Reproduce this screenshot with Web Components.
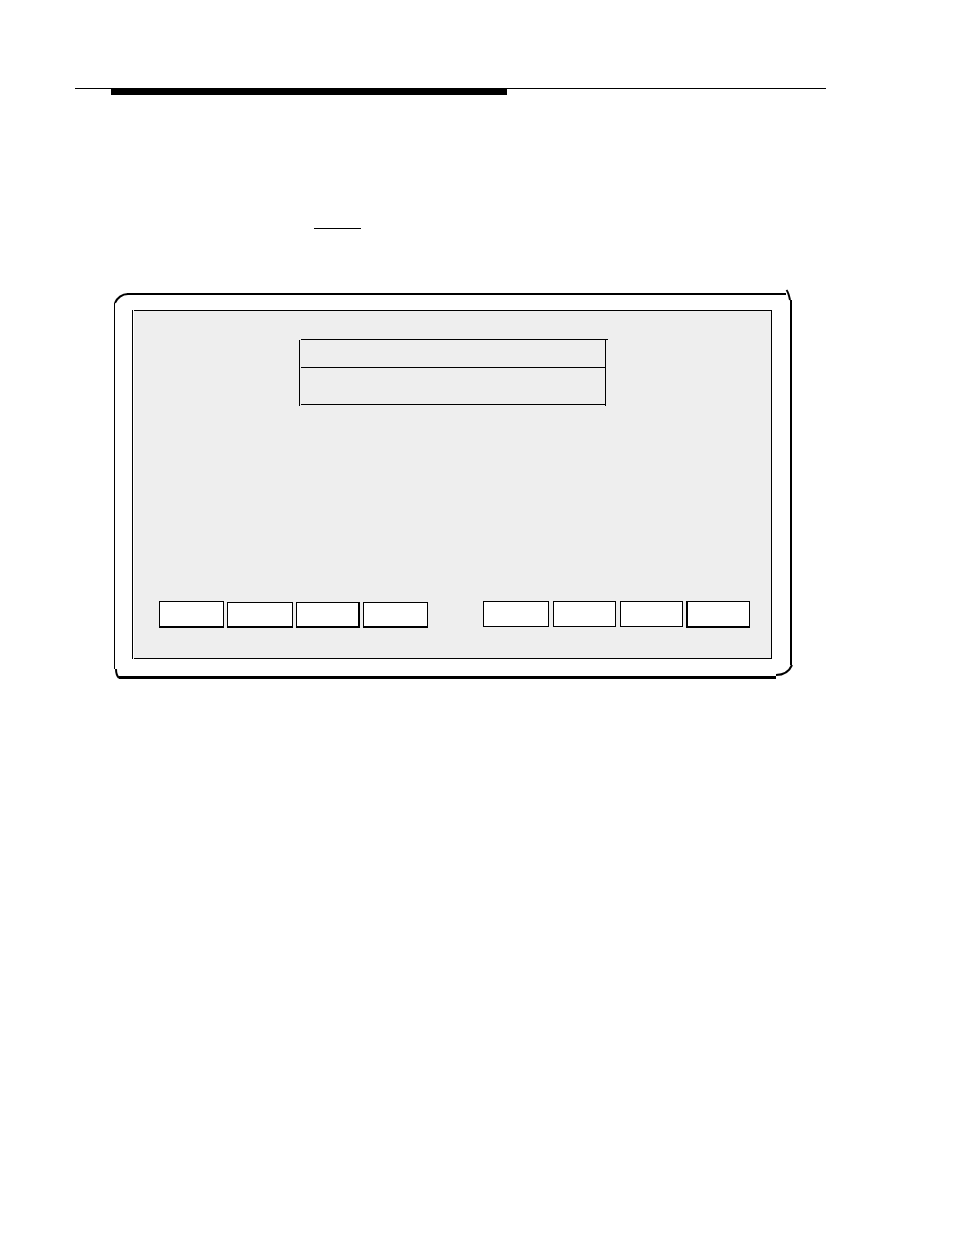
<!DOCTYPE html>
<html lang="en">
<head>
<meta charset="utf-8">
<meta name="viewport" content="width=device-width, initial-scale=1">
<title>Terminal screen</title>
<style>
  body {
    margin: 0;
    background: #fff;
    font-family: "Liberation Sans", sans-serif;
  }
</style>
</head>
<body>
<manual-page>
  <page-rule slot="header"></page-rule>
  <blank-line></blank-line>
  <terminal-frame>
    <message-box></message-box>
    <key-bank slot="keys" first="1"></key-bank>
    <key-bank slot="keys" first="5" class="right"></key-bank>
  </terminal-frame>
</manual-page>

<script>
function define(name, html) {
  const template = document.createElement("template");
  template.innerHTML = html;
  customElements.define(
    name,
    class extends HTMLElement {
      constructor() {
        super();
        this.attachShadow({ mode: "open" }).appendChild(template.content.cloneNode(true));
      }
    }
  );
}

define("manual-page", `
  <style>
    :host { display: block; box-sizing: border-box; min-height: 100vh; padding-top: 88px; }
    header { margin: 0 128px 0 75px; }
    main { display: flow-root; margin: 0 161px 0 114px; }
  </style>
  <header><slot name="header"></slot></header>
  <main><slot></slot></main>
`);

// thin rule with a heavy bar hanging from it
define("page-rule", `
  <style>
    :host { display: block; border-top: 1px solid #000; }
    div { width: 396px; height: 6px; margin-left: 36px; background: #000; }
  </style>
  <div></div>
`);

define("blank-line", `
  <style>
    :host { display: block; padding: 133px 0 62px 200px; }
    div { width: 47px; border-top: 1px solid #000; }
  </style>
  <div></div>
`);

// bezel: corners and edges in a 3x3 grid, the screen in the middle cell
define("terminal-frame", `
  <style>
    :host {
      display: grid;
      grid-template-columns: 18px 1fr 21px;
      grid-template-rows: 19px 1fr 20px;
    }
    svg { display: block; overflow: visible; }
    path { fill: none; stroke: #000; stroke-width: 2; }
    .top { margin-top: 2px; border-top: 2px solid #000; }
    .left { border-left: 1px solid #000; }
    .right { margin-right: 1px; border-right: 2px solid #000; }
    .bottom { border-bottom: 3px solid #000; }
    .screen { border-left: 1px solid #000; padding-left: 1px; }
    .panel {
      display: flex;
      flex-direction: column;
      border: solid #000;
      border-width: 1px 1px 1px 0;
      padding: 29px 0 30px;
      background: #eee;
    }
    .text { min-height: 195px; }
    .keys { display: flex; justify-content: space-between; padding: 0 21px 0 25px; }
  </style>
  <svg width="18" height="19" aria-hidden="true">
    <path d="M1 12C3 7 8 3 14 3"/>
    <rect y="12" width="1" height="7"/>
    <rect x="13" y="2" width="5" height="2"/>
  </svg>
  <div class="top"></div>
  <svg width="21" height="19" aria-hidden="true">
    <path d="M14.5 -1C16 1 17 4 18 9"/>
    <rect y="2" width="14" height="2"/>
    <rect x="18" y="9" width="2" height="10"/>
  </svg>
  <div class="left"></div>
  <div class="screen">
    <div class="panel">
      <slot></slot>
      <div class="text"></div>
      <div class="keys"><slot name="keys"></slot></div>
    </div>
  </div>
  <div class="right"></div>
  <svg width="18" height="20" aria-hidden="true">
    <path d="M2 10C2 14 3 17 5 19"/>
    <rect width="1" height="10"/>
    <rect x="5" y="17" width="13" height="3"/>
  </svg>
  <div class="bottom"></div>
  <svg width="21" height="20" aria-hidden="true">
    <path d="M20 6C17 13 12 16 4 16"/>
    <rect x="18" width="2" height="6"/>
    <rect y="17" width="4" height="3"/>
  </svg>
`);

define("message-box", `
  <style>
    :host {
      display: block;
      box-sizing: border-box;
      width: 307px;
      align-self: center;
      border: solid #000;
      border-width: 0 1px;
      padding: 0 0 1px 1px;
    }
    .title { height: 27px; margin: -1px -3px 0 0; border-top: 1px solid #000; }
    .body { height: 36px; border: solid #000; border-width: 1px 0; }
  </style>
  <div class="title"></div>
  <div class="body"></div>
`);

define("function-key", `
  <style>
    :host { display: block; }
    button {
      display: block;
      box-sizing: border-box;
      width: 100%;
      height: var(--key-height, 26px);
      margin: 0;
      padding: 0;
      border: 1px solid #000;
      border-right-width: var(--key-right, 1px);
      border-bottom-width: var(--key-bottom, 1px);
      border-radius: 0;
      background: #fff;
      font: inherit;
    }
  </style>
  <button type="button"></button>
`);

customElements.define(
  "key-bank",
  class KeyBank extends HTMLElement {
    constructor() {
      super();
      this.attachShadow({ mode: "open" }).innerHTML = `
        <style>
          :host {
            display: grid;
            grid-template-columns: 65px 66px 64px 65px;
            gap: 3px;
            align-items: end;
            --key-bottom: 2px;
          }
          function-key:first-child, style + function-key { --key-height: 27px; }
          function-key:nth-of-type(3) { --key-right: 2px; }
          :host(.right) {
            grid-template-columns: 66px 63px 63px 63px;
            gap: 4px;
            align-items: start;
            --key-bottom: 1px;
          }
          :host(.right) function-key { --key-height: 26px; --key-right: 1px; }
          :host(.right) function-key:last-child {
            --key-height: 27px;
            --key-bottom: 2px;
            box-shadow: -1px 0 #000;
          }
        </style>
        <function-key></function-key>
        <function-key></function-key>
        <function-key></function-key>
        <function-key></function-key>
      `;
    }

    connectedCallback() {
      const first = Number(this.getAttribute("first"));
      this.shadowRoot.querySelectorAll("function-key").forEach((key, i) => {
        key.shadowRoot.querySelector("button").setAttribute("aria-label", "F" + (first + i));
      });
    }
  }
);
</script>
</body>
</html>
